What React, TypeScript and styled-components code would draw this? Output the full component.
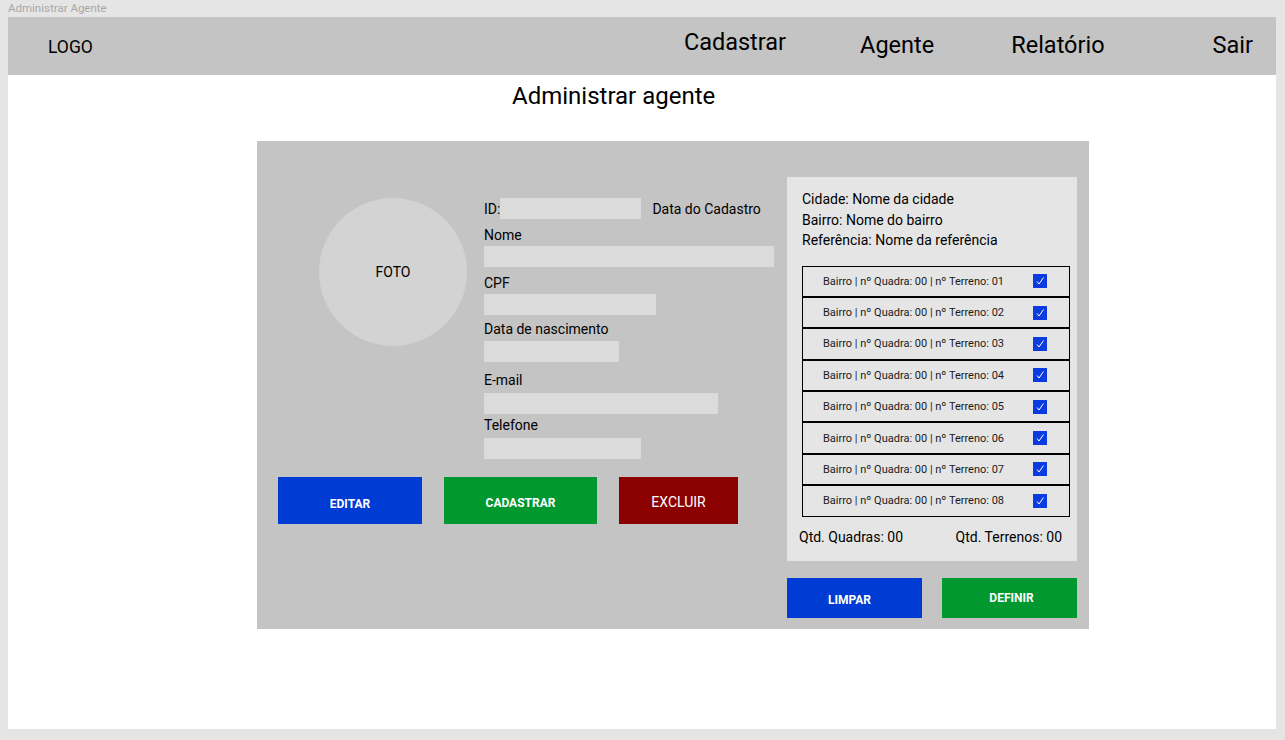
import React from "react";
import styled, { createGlobalStyle } from "styled-components";

// Dados dos terrenos
const terrenos = ["01", "02", "03", "04", "05", "06", "07", "08"];

const GlobalStyle = createGlobalStyle`
  body {
    margin: 0;
    background: #e5e5e5;
    font-family: Roboto, "Liberation Sans", sans-serif;
    color: #000;
  }
`;

const Caption = styled.div`
  height: 17px;
  padding-left: 8px;
  font-size: 11.5px;
  line-height: 17px;
  color: #a8a8a8;
`;

const Frame = styled.div`
  margin-left: 8px;
  width: 1268px;
  height: 712px;
  background: #fff;
`;

const Header = styled.header`
  height: 58px;
  background: #c4c4c4;
  display: flex;
  align-items: center;
`;

const Logo = styled.div`
  margin-left: 40px;
  font-size: 17.5px;
  margin-top: 2px;
`;

const Nav = styled.nav`
  margin-left: auto;
  display: flex;
  align-items: center;
  padding-right: 23px;
`;

const NavItem = styled.a<{ $gap: number; $lift?: number }>`
  margin-left: ${(p) => p.$gap}px;
  font-size: 23.5px;
  color: #000;
  text-decoration: none;
  position: relative;
  top: ${(p) => -1 - (p.$lift ?? 0)}px;
`;

const Title = styled.h1`
  margin: 7px 0 0 504px;
  font-size: 24px;
  font-weight: 400;
  line-height: 28px;
`;

const Panel = styled.div`
  margin: 31px 0 0 249px;
  width: 832px;
  height: 488px;
  background: #c4c4c4;
  display: flex;
  box-sizing: border-box;
`;

const LeftSide = styled.div`
  width: 530px;
  padding: 57px 0 0 21px;
  box-sizing: border-box;
`;

const TopRow = styled.div`
  display: flex;
  align-items: flex-start;
`;

const Photo = styled.div`
  margin-left: 41px;
  width: 148px;
  height: 148px;
  border-radius: 50%;
  background: #d3d3d3;
  display: flex;
  align-items: center;
  justify-content: center;
  font-size: 14px;
`;

const Form = styled.div`
  margin-left: 17px;
  font-size: 14px;
`;

const IdRow = styled.div`
  display: flex;
  align-items: center;
  height: 21px;
`;

const Input = styled.div<{ $w: number }>`
  width: ${(p) => p.$w}px;
  height: 21px;
  background: #dbdbdb;
`;

const DateLabel = styled.span`
  margin-left: 11px;
`;

const Label = styled.div<{ $mt: number; $mb: number }>`
  margin-top: ${(p) => p.$mt}px;
  margin-bottom: ${(p) => p.$mb}px;
  line-height: 17px;
`;

const ButtonRow = styled.div`
  display: flex;
  gap: 22px;
  margin-top: 18px;
`;

const Button = styled.button<{
  $bg: string;
  $w: number;
  $h: number;
  $pt: number;
  $dx?: number;
  $bold?: boolean;
}>`
  width: ${(p) => p.$w}px;
  height: ${(p) => p.$h}px;
  background: ${(p) => p.$bg};
  color: #fff;
  border: none;
  padding: ${(p) => p.$pt}px 0 0;
  padding-left: ${(p) => Math.max(0, p.$dx ?? 0) * 2}px;
  padding-right: ${(p) => Math.max(0, -(p.$dx ?? 0)) * 2}px;
  font-family: Roboto, "Liberation Sans", sans-serif;
  font-size: ${(p) => (p.$bold ? 12 : 14)}px;
  font-weight: ${(p) => (p.$bold ? 700 : 400)};
`;

const RightSide = styled.div`
  width: 290px;
  padding-top: 36px;
`;

const InfoBox = styled.div`
  height: 384px;
  background: #e5e5e5;
  padding: 12px 0 0 15px;
  box-sizing: border-box;
  font-size: 14px;
`;

const InfoLine = styled.div`
  line-height: 20.5px;
`;

const List = styled.div`
  margin-top: 15px;
  width: 268px;
  height: 251px;
  display: flex;
  flex-direction: column;
`;

const Row = styled.div`
  flex: 1;
  border: 1px solid #000;
  display: flex;
  align-items: center;
  padding-left: 20px;
  font-size: 11px;
  color: #1a1a1a;
`;

const Check = styled.span`
  margin-left: auto;
  margin-right: 22px;
  width: 14px;
  height: 14px;
  background: #0a3be0;
  display: flex;
  align-items: center;
  justify-content: center;
`;

const Totals = styled.div`
  display: flex;
  justify-content: space-between;
  margin: 12px 15px 0 -3px;
  line-height: 17px;
`;

const ActionRow = styled.div`
  display: flex;
  gap: 20px;
  margin-top: 17px;
`;

export default function App() {
  return (
    <>
      <GlobalStyle />
      <Caption>Administrar Agente</Caption>
      <Frame>
        <Header>
          <Logo>LOGO</Logo>
          <Nav>
            <NavItem $gap={0} $lift={3}>Cadastrar</NavItem>
            <NavItem $gap={74}>Agente</NavItem>
            <NavItem $gap={77}>Relatório</NavItem>
            <NavItem $gap={108}>Sair</NavItem>
          </Nav>
        </Header>

        <Title>Administrar agente</Title>

        <Panel>
          <LeftSide>
            <TopRow>
              <Photo>FOTO</Photo>
              <Form>
                <IdRow>
                  <span>ID:</span>
                  <Input $w={141} />
                  <DateLabel>Data do Cadastro</DateLabel>
                </IdRow>
                <Label $mt={8} $mb={2}>Nome</Label>
                <Input $w={290} />
                <Label $mt={8} $mb={2}>CPF</Label>
                <Input $w={172} />
                <Label $mt={6} $mb={3}>Data de nascimento</Label>
                <Input $w={135} />
                <Label $mt={10} $mb={4}>E-mail</Label>
                <Input $w={234} />
                <Label $mt={3} $mb={4}>Telefone</Label>
                <Input $w={157} />
              </Form>
            </TopRow>
            <ButtonRow>
              <Button $bg="#003bd4" $w={144} $h={47} $pt={7} $bold>EDITAR</Button>
              <Button $bg="#00982f" $w={153} $h={47} $pt={5} $bold>CADASTRAR</Button>
              <Button $bg="#8b0000" $w={119} $h={47} $pt={2}>EXCLUIR</Button>
            </ButtonRow>
          </LeftSide>

          <RightSide>
            <InfoBox>
              <InfoLine>Cidade: Nome da cidade</InfoLine>
              <InfoLine>Bairro: Nome do bairro</InfoLine>
              <InfoLine>Referência: Nome da referência</InfoLine>
              <List>
                {terrenos.map((t) => (
                  <Row key={t}>
                    Bairro | nº Quadra: 00 | nº Terreno: {t}
                    <Check>
                      <svg width="10" height="10" viewBox="0 0 10 10">
                        <path d="M2 5.5 L4 8 L8.5 1.5" stroke="#fff" strokeWidth="1" fill="none" />
                      </svg>
                    </Check>
                  </Row>
                ))}
              </List>
              <Totals>
                <span>Qtd. Quadras: 00</span>
                <span>Qtd. Terrenos: 00</span>
              </Totals>
            </InfoBox>
            <ActionRow>
              <Button $bg="#003bd4" $w={135} $h={40} $pt={4} $dx={-5} $bold>LIMPAR</Button>
              <Button $bg="#00982f" $w={135} $h={40} $pt={0} $dx={2} $bold>DEFINIR</Button>
            </ActionRow>
          </RightSide>
        </Panel>
      </Frame>
    </>
  );
}
